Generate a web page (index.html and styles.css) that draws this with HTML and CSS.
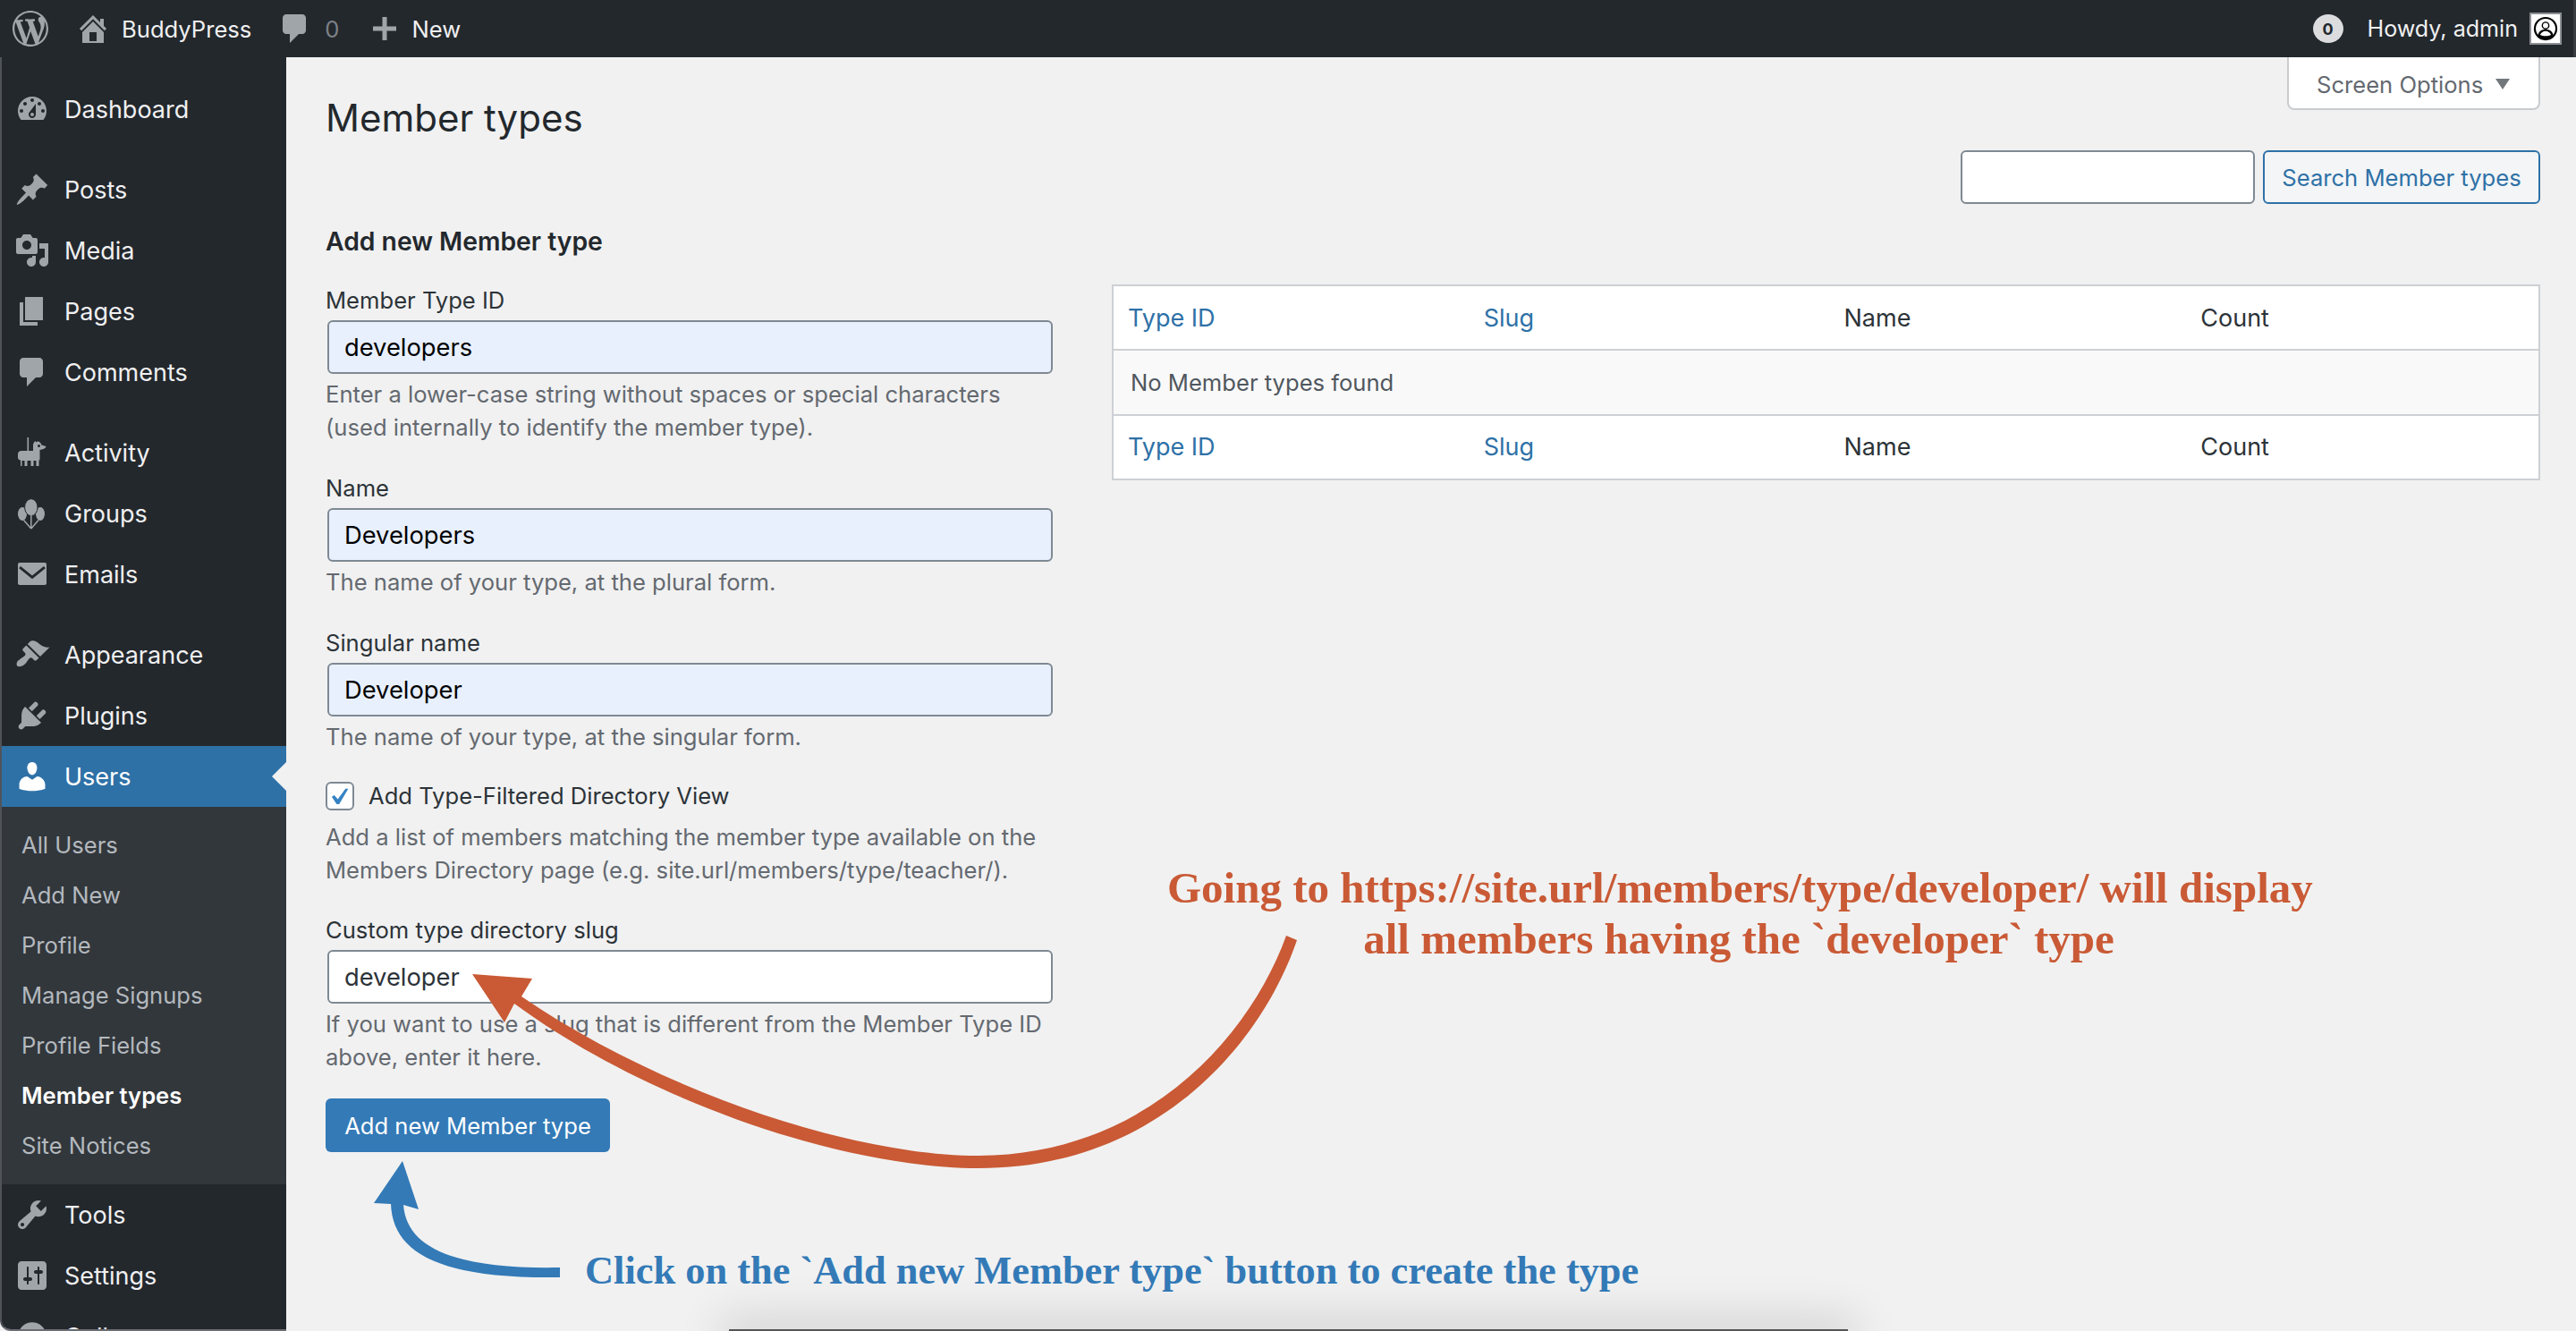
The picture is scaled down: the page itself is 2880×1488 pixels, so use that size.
FILE: index.html
```html
<!DOCTYPE html>
<html lang="en">
<head>
    <meta charset="UTF-8">
    <title>Member types</title>
    <link rel="stylesheet" href="styles.css">
</head>
<body>
    <header class="adminbar">
        <svg class="bar-logo" viewBox="0 0 20 20"><path d="M20 10c0-5.510-4.490-10-10-10C4.480 0 0 4.490 0 10c0 5.520 4.480 10 10 10 5.510 0 10-4.480 10-10zM7.780 15.370L4.370 6.220c.550-.020 1.170-.080 1.170-.080.500-.060.440-1.130-.060-1.110 0 0-1.450.110-2.370.110-.180 0-.370 0-.580-.010C4.120 2.690 6.910 1.050 10 1.050c2.300 0 4.390.870 5.960 2.300-.660-.110-1.600.380-1.600 1.540 0 .720.440 1.320.880 2.040.350.610.550 1.360.550 2.460 0 1.490-1.400 5-1.400 5l-3.030-8.370c.540-.020.820-.170.820-.170.500-.050.440-1.250-.060-1.220 0 0-1.440.120-2.380.120-.870 0-2.330-.120-2.330-.120-.500-.030-.560 1.200-.060 1.220l.920.080 1.260 3.410zM17.410 10c.240-.640.740-1.870.430-4.250.700 1.290 1.050 2.710 1.050 4.250 0 3.290-1.730 6.240-4.400 7.780.970-2.590 1.940-5.200 2.920-7.780zM6.100 18.090C3.120 16.650 1.110 13.530 1.110 10c0-1.300.230-2.480.720-3.590C3.250 10.300 4.670 14.200 6.100 18.090zm4.030-6.630l2.580 6.980c-.860.290-1.760.450-2.710.450-.790 0-1.570-.110-2.290-.330.810-2.380 1.620-4.740 2.420-7.100z"/></svg>
        <svg class="bar-icon home" viewBox="0 0 20 20"><path d="M16 8.500l1.530 1.530-1.060 1.060L10 4.620l-6.470 6.470-1.060-1.060L10 2.500l4 4v-2h2v4zm-6-2.460l6 5.990V18H4v-5.970zM12 17v-5H8v5h4z"/></svg>
        <span class="bar-text site">BuddyPress</span>
        <svg class="bar-icon comment" viewBox="0 0 20 20"><path d="M5 2h9c1.100 0 2 .9 2 2v7c0 1.100-.9 2-2 2h-2l-5 5v-5H5c-1.100 0-2-.9-2-2V4c0-1.100.9-2 2-2z"/></svg>
        <span class="bar-text count">0</span>
        <svg class="bar-plus" viewBox="0 0 26 26"><path d="M10.500 0h5v10.500H26v5H15.500V26h-5V15.500H0v-5h10.500z"/></svg>
        <span class="bar-text">New</span>
        <span class="bar-right">
            <span class="badge">0</span>
            <span class="bar-text">Howdy, admin</span>
            <span class="avatar">
                <svg viewBox="0 0 32 32"><circle cx="16" cy="16" r="15" fill="#000"/><circle cx="16" cy="16" r="12.500" fill="#fff"/><circle cx="16" cy="12" r="5" fill="#000"/><circle cx="16" cy="12" r="3.400" fill="#fff"/><path d="M6 25c1-6 5-8 10-8s9 2 10 8c-3 3-7 4.500-10 4.500S9 28 6 25z" fill="#000"/><path d="M9 24c1-3 4-5 7-5s6 2 7 5c-4 2-10 2-14 0z" fill="#fff"/></svg>
            </span>
        </span>
    </header>

    <div class="wrap">
        <nav class="sidebar">
            <a class="menu-item"><svg class="menu-icon" viewBox="0 0 20 20"><path d="M3.760 16h12.480c1.100-1.370 1.760-3.110 1.760-5 0-4.420-3.580-8-8-8s-8 3.580-8 8c0 1.890.660 3.630 1.760 5zM10 4c.550 0 1 .450 1 1s-.450 1-1 1-1-.450-1-1 .450-1 1-1zM6 6c.550 0 1 .450 1 1s-.450 1-1 1-1-.450-1-1 .450-1 1-1zm8 0c.550 0 1 .450 1 1s-.450 1-1 1-1-.450-1-1 .450-1 1-1zm-5.370 5.550L12 7v6c0 1.100-.900 2-2 2s-2-.900-2-2c0-.570.240-1.080.630-1.450zM4 10c.550 0 1 .450 1 1s-.450 1-1 1-1-.450-1-1 .450-1 1-1zm12 0c.550 0 1 .450 1 1s-.450 1-1 1-1-.450-1-1 .450-1 1-1zm-5 3c0-.550-.450-1-1-1s-1 .450-1 1 .450 1 1 1 1-.450 1-1z" fill-rule="evenodd"/></svg>Dashboard</a>

            <a class="menu-item sep"><svg class="menu-icon" viewBox="0 0 20 20"><path d="M10.440 3.020l1.820-1.820 6.360 6.350-1.830 1.820c-1.050-.680-2.480-.570-3.410.360l-.750.750c-.920.930-1.040 2.350-.350 3.410l-1.830 1.820-2.410-2.410-2.800 2.790c-.420.420-3.380 2.710-3.800 2.290s1.860-3.390 2.280-3.810l2.790-2.790L4.100 9.360l1.830-1.820c1.050.690 2.480.570 3.400-.360l.750-.750c.930-.920 1.050-2.350.360-3.410z"/></svg>Posts</a>
            <a class="menu-item"><svg class="menu-icon" viewBox="0 0 20 20"><path fill-rule="evenodd" d="M13 11V4c0-.550-.450-1-1-1h-1.670L9 1H5L3.670 3H2c-.550 0-1 .450-1 1v7c0 .550.450 1 1 1h10c.550 0 1-.450 1-1zM7 4.500c1.380 0 2.500 1.120 2.500 2.500S8.380 9.500 7 9.500 4.500 8.380 4.500 7 5.620 4.500 7 4.500zM14 6h5v10.500c0 1.380-1.120 2.500-2.500 2.500S14 17.880 14 16.500s1.120-2.500 2.500-2.500c.170 0 .340.020.500.050V9h-3V6zm-4 8.050V13h2v3.500c0 1.380-1.120 2.500-2.500 2.500S7 17.880 7 16.500 8.120 14 9.500 14c.170 0 .340.020.500.050z"/></svg>Media</a>
            <a class="menu-item"><svg class="menu-icon" viewBox="0 0 20 20"><path d="M6 15V2h10v13H6zm-1 1h8v2H3V5h2v11z"/></svg>Pages</a>
            <a class="menu-item"><svg class="menu-icon" viewBox="0 0 20 20"><path d="M5 2h9c1.100 0 2 .900 2 2v7c0 1.100-.900 2-2 2h-2l-5 5v-5H5c-1.100 0-2-.900-2-2V4c0-1.100.900-2 2-2z"/></svg>Comments</a>

            <a class="menu-item sep"><svg class="menu-icon" viewBox="0 0 40 40"><path d="M14.500 3h1.600v15h-1.600z"/><path fill-rule="evenodd" d="M4 22c0-2.500 1.500-4 4-4h13v-6c0-2 1-4 2.500-5l1 1.500c.8-1 2-1.300 3-.8 1.500.7 2.500 2.300 3 3.800l5 1.500c-.5 2-2.500 3.500-7 3.800V27c0 1-.5 1.500-1 1.500V35h-3v-6h-3v6h-3v-6h-4v6h-3v-6h-3v6H7v-6.500c-2 0-3-1.500-3-3zm22-9.500a1.500 1.500 0 1 0 0-.01z"/></svg>Activity</a>
            <a class="menu-item"><svg class="menu-icon" viewBox="0 0 40 40"><ellipse cx="9" cy="20.500" rx="5" ry="7.500"/><ellipse cx="29" cy="20.500" rx="5" ry="7.500"/><ellipse class="menu-balloon" cx="18.800" cy="13.200" rx="7.200" ry="9.500"/><path class="menu-lines" d="M18.800 22v15M10.500 27.500l8.300 9.500M27 27.500l-8.200 9.500"/></svg>Groups</a>
            <a class="menu-item"><svg class="menu-icon" viewBox="0 0 20 20"><path fill-rule="evenodd" d="M3 2.500h14c.600 0 1 .400 1 1v10.500c0 .600-.400 1-1 1H3c-.600 0-1-.400-1-1V3.500c0-.600.400-1 1-1zm.500 2l-.900 1.100L10 11.600l7.400-6-.900-1.100L10 9.700z" transform="translate(0 1)"/></svg>Emails</a>

            <a class="menu-item sep"><svg class="menu-icon" viewBox="0 0 20 20"><path d="M14.480 11.060L7.410 3.990l1.500-1.500c.500-.560 2.300-.470 3.510.320 1.210.800 1.430 1.280 2.910 2.100 1.180.640 2.450 1.260 4.450.850zm-.710.710L6.700 4.700 4.930 6.470c-.390.390-.390 1.020 0 1.410l1.060 1.060c.390.390.390 1.030 0 1.420-.600.600-1.430 1.110-2.210 1.690-.350.260-.700.530-1.010.84C1.430 13.250.900 15.550 1.640 16.290c.740.740 3.040.200 4.400-1.150.310-.310.580-.660.840-1.010.580-.780 1.090-1.610 1.690-2.210.390-.390 1.020-.390 1.410 0l1.060 1.060c.390.390 1.020.390 1.410 0z"/></svg>Appearance</a>
            <a class="menu-item"><svg class="menu-icon" viewBox="0 0 20 20"><path d="M13.110 4.360L9.870 7.600 8 5.730l3.240-3.240c.350-.340 1.050-.200 1.560.320.520.510.660 1.210.310 1.550zm-8 1.770l.910-1.120 9.010 9.010-1.190.840c-.710.710-2.630 1.160-3.820 1.160H6.140L4.900 17.260c-.590.590-1.540.590-2.120 0-.590-.580-.590-1.530 0-2.120l1.240-1.240v-3.880c0-1.130.400-3.190 1.090-3.890zm7.260 3.970l3.240-3.240c.340-.350 1.040-.210 1.550.310.520.510.660 1.210.310 1.550l-3.240 3.250z"/></svg>Plugins</a>
            <a class="menu-item active"><svg class="menu-icon" viewBox="0 0 20 20"><path d="M10 9.250c-2.270 0-2.730-3.440-2.730-3.440C7 4.020 7.820 2 9.970 2c2.160 0 2.980 2.020 2.710 3.810 0 0-.410 3.440-2.680 3.440zm0 2.570L12.720 10c2.390 0 4.520 2.330 4.520 4.530v2.490s-3.650 1.130-7.240 1.130c-3.650 0-7.240-1.130-7.240-1.130v-2.490c0-2.250 1.940-4.480 4.470-4.480z"/></svg>Users</a>
            <div class="submenu">
                <a>All Users</a>
                <a>Add New</a>
                <a>Profile</a>
                <a>Manage Signups</a>
                <a>Profile Fields</a>
                <a class="current">Member types</a>
                <a>Site Notices</a>
            </div>
            <a class="menu-item"><svg class="menu-icon" viewBox="0 0 20 20"><path fill-rule="evenodd" d="M16.680 9.770c-1.340 1.340-3.300 1.670-4.950.990l-5.410 6.520c-.990.990-2.590.990-3.570 0-.990-.980-.990-2.580 0-3.570l6.520-5.420c-.680-1.650-.350-3.610.990-4.950 1.280-1.280 3.120-1.620 4.720-1.060l-2.890 2.890 2.820 2.820 2.860-2.870c.530 1.580.180 3.390-1.090 4.650zM3.810 16.210c.400.390 1.030.390 1.420 0 .400-.400.400-1.030 0-1.430-.390-.390-1.020-.390-1.420 0-.390.400-.390 1.030 0 1.430z"/></svg>Tools</a>
            <a class="menu-item"><svg class="menu-icon" viewBox="0 0 20 20"><path fill-rule="evenodd" d="M18 16V4c0-1.100-.900-2-2-2H4c-1.100 0-2 .900-2 2v12c0 1.100.900 2 2 2h12c1.100 0 2-.900 2-2zM8 11h1c.550 0 1 .450 1 1s-.450 1-1 1H8v1.500c0 .280-.220.500-.500.500s-.500-.220-.500-.500V13H6c-.550 0-1-.450-1-1s.450-1 1-1h1V5.500c0-.280.220-.500.500-.500s.500.220.500.500V11zm5-2h-1c-.550 0-1-.450-1-1s.450-1 1-1h1V5.500c0-.280.220-.500.500-.500s.500.220.500.500V7h1c.550 0 1 .450 1 1s-.450 1-1 1h-1v5.500c0 .280-.220.500-.500.500s-.500-.220-.500-.500V9z"/></svg>Settings</a>
            <a class="menu-item"><svg class="menu-icon" viewBox="0 0 20 20"><path fill-rule="evenodd" d="M10 2.160c4.330 0 7.840 3.510 7.840 7.840s-3.510 7.840-7.840 7.840S2.160 14.330 2.160 10 5.670 2.160 10 2.160zM11 6l-4 4 4 4z"/></svg>Collapse</a>
        </nav>

        <main class="content">
            <div class="page-top">
                <h1>Member types</h1>
                <button class="screen-tab">Screen Options<span class="tab-arrow"></span></button>
            </div>

            <div class="search-row">
                <input class="field search-input" type="text">
                <button class="search-btn">Search Member types</button>
            </div>

            <div class="columns">
                <form class="type-form">
                    <h2>Add new Member type</h2>

                    <div class="form-field">
                        <label>Member Type ID</label>
                        <input class="field filled" type="text" value="developers">
                        <p>Enter a lower-case string without spaces or special characters<br>(used internally to identify the member type).</p>
                    </div>
                    <div class="form-field">
                        <label>Name</label>
                        <input class="field filled" type="text" value="Developers">
                        <p>The name of your type, at the plural form.</p>
                    </div>
                    <div class="form-field">
                        <label>Singular name</label>
                        <input class="field filled" type="text" value="Developer">
                        <p>The name of your type, at the singular form.</p>
                    </div>
                    <div class="form-field check-field">
                        <label class="check-label">
                            <span class="checkbox"><svg viewBox="0 0 20 20"><path d="M14.800 3.600h2.400L9.400 17H7.200L3 10.600l2.200-1.400 3 3.400z"/></svg></span>
                            Add Type-Filtered Directory View
                        </label>
                        <p>Add a list of members matching the member type available on the<br>Members Directory page (e.g. site.url/members/type/teacher/).</p>
                    </div>
                    <div class="form-field slug-field">
                        <label>Custom type directory slug</label>
                        <input class="field" type="text" value="developer">
                        <p>If you want to use a slug that is different from the Member Type ID<br>above, enter it here.</p>
                    </div>
                    <button class="submit-btn" type="button">Add new Member type</button>
                </form>

                <div class="list-col">
                    <table class="types-table">
                        <thead>
                            <tr><th><a>Type ID</a></th><th><a>Slug</a></th><th class="plain">Name</th><th class="plain">Count</th></tr>
                        </thead>
                        <tbody>
                            <tr><td colspan="4">No Member types found</td></tr>
                        </tbody>
                        <tfoot>
                            <tr><th><a>Type ID</a></th><th><a>Slug</a></th><th class="plain">Name</th><th class="plain">Count</th></tr>
                        </tfoot>
                    </table>
                </div>
            </div>
        </main>
    </div>

    <!-- annotations drawn on top of the screenshot -->
    <svg class="arrows" viewBox="0 0 2880 1488">
        <path class="arrow-orange" d="M528 1089L595 1094 583 1114C735 1218 950 1292 1094 1292 1283 1291 1398 1157 1438 1046L1450 1051C1412 1163 1297 1306 1094 1306 945 1306 725 1232 575 1122L564 1143z"/>
        <path class="arrow-blue" d="M450 1298L468 1352 451 1347C455 1400 520 1419 626 1417V1428C490 1430 439 1400 437 1346L418 1345z"/>
    </svg>
    <p class="note note-orange">Going to https://site.url/members/type/developer/ will display<br>all members having the `developer` type</p>
    <p class="note note-blue">Click on the `Add new Member type` button to create the type</p>
    <div class="bottom-shadow"></div>
</body>
</html>
```

FILE: styles.css
```css
* {
    box-sizing: border-box;
}

html, body {
    margin: 0;
    height: 1488px;
    overflow: hidden;
}

body {
    position: relative;
    display: flex;
    flex-direction: column;
    background: #f1f1f1;
    font-family: Inter, "Noto Sans", sans-serif;
    font-size: 25.6px;
    color: #2c3338;
}

/* top bar */
.adminbar {
    display: flex;
    align-items: center;
    height: 64px;
    flex: none;
    background: #23282d;
    color: #f0f0f1;
    padding-left: 14px;
    border-right: 3px solid #3a3e43;
}

.adminbar svg {
    fill: #a0a5aa;
}

.bar-logo {
    width: 40px;
    height: 40px;
    margin-right: 30px;
}

.bar-icon {
    width: 40px;
    height: 40px;
}

.bar-icon.home {
    margin-right: 12px;
}

.bar-icon.comment {
    margin-left: 29px;
    margin-right: 13px;
}

.bar-text {
    font-size: 25.6px;
    white-space: nowrap;
}

.bar-text.count {
    color: #7c8187;
    margin-right: 37px;
}

.bar-plus {
    width: 26px;
    height: 26px;
    margin-right: 18px;
}

.bar-right {
    display: flex;
    align-items: center;
    margin-left: auto;
    margin-right: 13px;
}

.bar-right .bar-text {
    font-size: 25.1px;
}

.badge {
    display: flex;
    align-items: center;
    justify-content: center;
    width: 34px;
    height: 32px;
    margin-right: 27px;
    border-radius: 50%;
    background: #dcdcde;
    color: #23282d;
    font-size: 18px;
    font-weight: 700;
}

.avatar {
    display: flex;
    align-items: center;
    justify-content: center;
    width: 36px;
    height: 36px;
    margin-left: 13px;
    border: 2px solid #8c8f94;
    background: #fff;
}

.avatar svg {
    width: 28px;
    height: 28px;
}

/* left menu */
.wrap {
    display: flex;
    flex: 1;
    min-height: 0;
}

.sidebar {
    width: 320px;
    flex: none;
    padding-top: 24px;
    background: #23282d;
    border-left: 2px solid #50545a;
    border-bottom: 2px solid #6a6e73;
    border-bottom-left-radius: 12px;
    overflow: hidden;
}

.menu-item {
    position: relative;
    display: flex;
    align-items: center;
    height: 68px;
    padding-left: 14px;
    font-size: 27px;
    color: #f0f0f1;
}

.menu-item.sep {
    margin-top: 22px;
}

.menu-icon {
    width: 40px;
    height: 40px;
    margin-right: 16px;
    flex: none;
    fill: #a0a5aa;
}

.menu-balloon {
    stroke: #23282d;
    stroke-width: 1;
}

.menu-lines {
    fill: none;
    stroke: #a0a5aa;
    stroke-width: 1.500;
}

.menu-item.active {
    background: #2e71a7;
    color: #fff;
}

.menu-item.active .menu-icon {
    fill: #fff;
}

.menu-item.active::after {
    content: "";
    position: absolute;
    right: 0;
    top: 50%;
    margin-top: -16px;
    border: 16px solid transparent;
    border-left-width: 0;
    border-right-color: #f1f1f1;
}

.submenu {
    display: flex;
    flex-direction: column;
    padding: 14px 0 16px;
    background: #32373c;
}

.submenu a {
    display: flex;
    align-items: center;
    height: 56px;
    padding-left: 22px;
    font-size: 25.6px;
    color: #b4b9be;
}

.submenu a.current {
    color: #fff;
    font-weight: 600;
}

/* page */
.content {
    flex: 1;
    min-width: 0;
    padding: 0 40px 0 44px;
}

.page-top {
    display: flex;
    justify-content: space-between;
    align-items: flex-start;
    height: 104px;
}

h1 {
    margin: 43px 0 0;
    font-size: 42px;
    line-height: 50px;
    font-weight: 400;
    color: #23282d;
}

.screen-tab {
    display: flex;
    align-items: center;
    width: 283px;
    height: 59px;
    padding: 3px 0 0 31px;
    background: #fff;
    border: 2px solid #c9cccf;
    border-top: none;
    border-radius: 0 0 8px 8px;
    font-family: inherit;
    font-size: 25.6px;
    color: #646970;
}

.tab-arrow {
    margin-left: 14px;
    border-style: solid;
    border-width: 12px 8px 0;
    border-color: #72777c transparent transparent;
}

.search-row {
    display: flex;
    justify-content: flex-end;
    gap: 9px;
}

.field {
    display: block;
    width: 811px;
    height: 60px;
    margin-left: 2px;
    padding: 0 17px;
    background: #fff;
    border: 2px solid #7e8993;
    border-radius: 6px;
    font-family: inherit;
    font-size: 27.3px;
    color: #2c3338;
}

.field.filled {
    background: #e8f0fe;
    color: #000;
}

.search-input {
    width: 329px;
    margin-left: 0;
}

.search-btn {
    width: 310px;
    height: 60px;
    padding: 0;
    background: #f3f5f6;
    border: 2px solid #2e71a7;
    border-radius: 6px;
    font-family: inherit;
    font-size: 25.6px;
    color: #2e71a7;
}

.columns {
    display: grid;
    grid-template-columns: 814px 1fr;
    column-gap: 65px;
}

/* add form */
.type-form h2 {
    margin: 24px 0 30px;
    font-size: 28.3px;
    line-height: 36px;
    font-weight: 600;
    color: #23282d;
}

.form-field {
    margin-bottom: 32px;
}

.form-field label {
    display: block;
    line-height: 36px;
    margin-bottom: 4px;
}

.form-field p {
    margin: 4px 0 0;
    line-height: 37px;
    color: #646970;
}

.form-field .check-label {
    display: flex;
    align-items: center;
    height: 32px;
    gap: 16px;
    margin-bottom: 0;
}

.check-field p {
    margin-top: 11px;
}

.checkbox {
    display: flex;
    align-items: center;
    justify-content: center;
    width: 32px;
    height: 32px;
    background: #fff;
    border: 2px solid #7e8993;
    border-radius: 6px;
}

.checkbox svg {
    width: 26px;
    height: 26px;
    fill: #3582c4;
}

.form-field.check-field {
    margin-bottom: 31px;
}

.form-field.slug-field {
    margin-bottom: 28px;
}

.submit-btn {
    display: block;
    width: 318px;
    height: 60px;
    padding: 0;
    background: #337ab7;
    border: none;
    border-radius: 6px;
    font-family: inherit;
    font-size: 25.6px;
    color: #fff;
}

/* list table */
.list-col {
    padding-top: 90px;
}

.types-table {
    width: 100%;
    border-collapse: collapse;
    table-layout: fixed;
    background: #fff;
    border: 2px solid #cdd0d4;
}

.types-table th,
.types-table td {
    height: 72.300px;
    padding: 0 0 0 16px;
    text-align: left;
    font-weight: 400;
    font-size: 27px;
    color: #2c3338;
}

.types-table th.plain {
    padding-left: 20px;
}

.types-table td {
    padding-left: 19px;
    font-size: 25.6px;
    background: #f9f9f9;
    color: #50575e;
    border-top: 2px solid #cdd0d4;
    border-bottom: 2px solid #cdd0d4;
}

.types-table a {
    color: #2e71a7;
}

/* annotations */
.arrows {
    position: absolute;
    left: 0;
    top: 0;
    width: 2880px;
    height: 1488px;
    pointer-events: none;
}

.arrow-orange {
    fill: #c95a35;
}

.arrow-blue {
    fill: #337ab7;
}

.note {
    position: absolute;
    margin: 0;
    font-family: "Liberation Serif", serif;
    line-height: 57px;
    font-weight: 700;
    white-space: nowrap;
}

.note-orange {
    left: 1305px;
    top: 964px;
    width: 1278px;
    font-size: 49px;
    text-align: center;
    color: #c95a35;
}

.note-blue {
    left: 654px;
    top: 1392px;
    font-size: 44.4px;
    color: #337ab7;
}

.bottom-shadow {
    position: absolute;
    left: 815px;
    top: 1486px;
    width: 1251px;
    height: 10px;
    background: #555;
    box-shadow: 0 0 50px 10px rgba(0, 0, 0, 0.16);
}
```
